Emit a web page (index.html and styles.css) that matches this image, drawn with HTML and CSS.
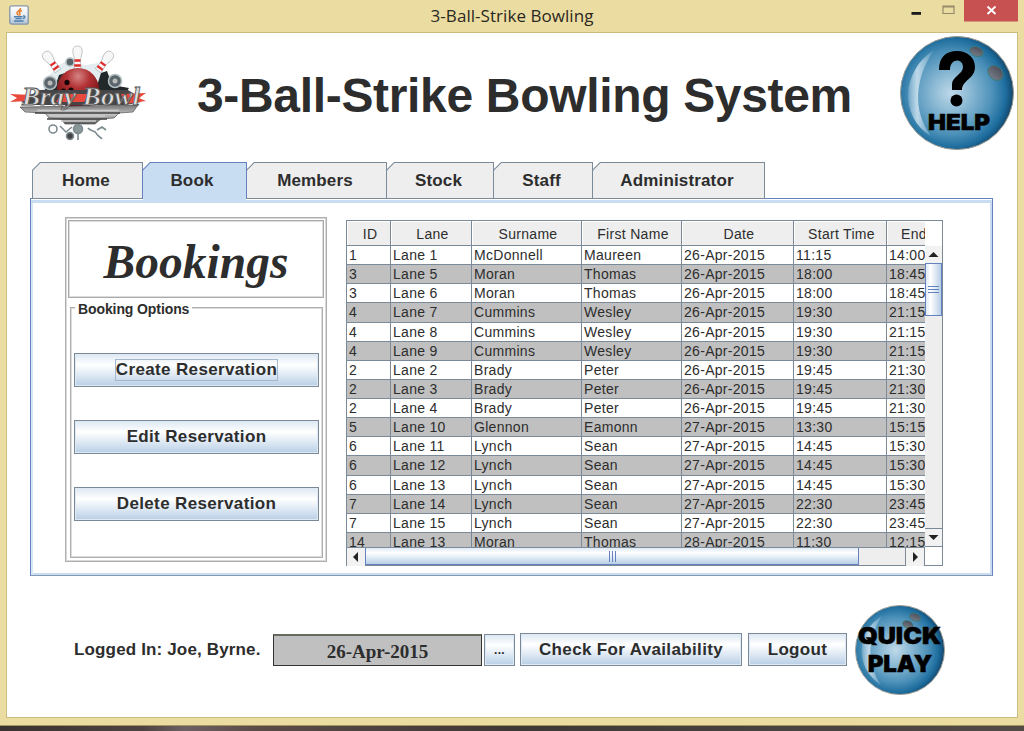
FILE: index.html
```html
<!DOCTYPE html>
<html lang="en">
<head>
<meta charset="utf-8">
<title>3-Ball-Strike Bowling</title>
<link rel="stylesheet" href="styles.css">
</head>
<body>
<div class="window">
  <div class="titlebar">
    <svg class="java" width="20" height="20" viewBox="0 0 20 20"><defs><linearGradient id="jv" x2="0" y2="1"><stop offset="0" stop-color="#fff"/><stop offset=".5" stop-color="#e8eef4"/><stop offset="1" stop-color="#a9bfd4"/></linearGradient></defs><rect x=".8" y=".8" width="18.4" height="18.4" rx="2" fill="url(#jv)" stroke="#8596a6" stroke-width="1.3"/><path d="M11.500 3c1 2-4 3-3.500 5 .2 1 1.500 1.300 1 2.600M13 5.500c-2.200 .8-3.200 1.900-2.300 2.900.6.8.2 1.500-.3 1.800" fill="none" stroke="#e5822f" stroke-width="1.600"/><path d="M5 11.800h8.500M6.500 13.600h6M14 11c2.600-.5 2.400 2-.3 2.600M5 16h9.500" fill="none" stroke="#4c7fae" stroke-width="1.400"/></svg>
    <span class="caption">3-Ball-Strike Bowling</span>
    <svg class="controls" width="113" height="22" viewBox="0 0 113 22"><rect x="6.500" y="12" width="9.500" height="2.800" fill="#1b1b1b"/><path d="M38 6h11v7.500h-11zM38 6.800h11" fill="none" stroke="#96896a" stroke-width="1.200"/><rect x="59" width="54" height="21.500" fill="#c75050"/><path d="M82.500 6.500l8 7.500M90.500 6.500l-8 7.500" stroke="#fff" stroke-width="1.900"/></svg>
  </div>
  <div class="client">
    <header class="header">
      <svg class="logo" width="142" height="100" viewBox="0 0 142 100">
        <defs>
          <radialGradient id="red" cx=".5" cy=".2" r=".8"><stop offset="0" stop-color="#d58484"/><stop offset=".35" stop-color="#b23134"/><stop offset="1" stop-color="#5a0709"/></radialGradient>
          <linearGradient id="silver" x2="0" y2="1"><stop offset="0" stop-color="#777"/><stop offset=".5" stop-color="#c4c4c4"/><stop offset="1" stop-color="#555"/></linearGradient>
          <g id="pin"><path d="M-3 8C-3 5-5.500 1-4.500-3C-3.500-7 3.500-7 4.500-3C5.500 1 3 5 3 8L3.500 17H-3.500Z" fill="#f7f7f7" stroke="#b5babb" stroke-width=".8"/><path d="M-3 8.500H3M-3.300 13.500H3.300" stroke="#e02b2b" stroke-width="2.400"/></g>
        </defs>
        <path d="M50 22c6-3 8-6 13-4l2 3 12 1 12-2 6 9 8 4v10l18 8-12 8H27l-5-7 12-6 2-11 8-6z" fill="#e3edef"/>
        <path d="M34 49l4-5 8 0 4-12 6-2-3 12 34 4 5-16 6-2 5 14 17 3-4 6H30z" fill="#23282a"/>
        <g fill="#59656a" stroke="#b3bfc1" stroke-width="1.500"><circle cx="61" cy="19" r="4"/><circle cx="41" cy="40" r="6.500"/><circle cx="106" cy="38" r="6.500"/></g>
        <g fill="#bbb"><circle cx="41" cy="40" r="2.500"/><circle cx="106" cy="38" r="2.500"/></g>
        <use href="#pin" transform="translate(39 14) rotate(-36)"/><use href="#pin" transform="translate(68.500 9)"/><use href="#pin" transform="translate(99 14) rotate(36)"/>
        <circle cx="69" cy="46" r="21" fill="url(#red)"/><ellipse cx="58" cy="39.500" rx="2.600" ry="2.800" fill="#170505"/><circle cx="54.500" cy="48" r="2.600" fill="#170505"/><circle cx="62" cy="47" r="2.600" fill="#170505"/>
        <path d="M14 52l10-1 4-4h91l6 4 9 0-5 5 3 3-15 3H21l-9-3 6-4z" fill="#464648"/>
        <path d="M1 51l22 1-5 6-17 1 7-4zM112 51l25-1-7 5 7 3-21 3zM52 51h28l-5 8H47z" fill="#e9483c"/>
        <path d="M11 64l118-2-5 7-14 1-5 5-13 1-6 5H56l-4-5-12-1-4-5-20-1z" fill="url(#silver)" stroke="#555" stroke-width=".7"/>
        <path d="M26 70h85M38 76h60" stroke="#444" stroke-width="1.400"/>
        <path d="M28 67.500h82M40 73h56M52 78h35" stroke="#ccc" stroke-width="1.500"/>
        <g fill="none" stroke="#7d8a8e" stroke-width="1.600"><circle cx="44" cy="86" r="4"/><circle cx="69" cy="86" r="4.500" fill="#8a9799"/><circle cx="61" cy="93" r="3.500" fill="#444"/><path d="M79 85c3 4 7 2 8 5s5 4 6 6M88 87l5-3 4 3M51 83l6 6 6-5M69 91v6"/></g>
        <text class="script" x="13" y="62" textLength="118" lengthAdjust="spacingAndGlyphs">Bray Bowl</text>
      </svg>
      <h1 class="heading">3-Ball-Strike Bowling System</h1>
      <svg class="help" width="116" height="116" viewBox="0 0 116 116">
        <defs>
          <radialGradient id="ball" cx=".45" cy=".5" r=".56"><stop offset="0" stop-color="#bfd9e9"/><stop offset=".25" stop-color="#94bfd8"/><stop offset=".65" stop-color="#4d91b9"/><stop offset=".86" stop-color="#1d6d9e"/><stop offset=".95" stop-color="#155079"/><stop offset="1" stop-color="#132f41"/></radialGradient>
          <linearGradient id="shine"><stop offset="0" stop-color="#d7e9f3" stop-opacity=".25"/><stop offset=".35" stop-color="#d7e9f3" stop-opacity=".8"/><stop offset="1" stop-color="#d7e9f3" stop-opacity=".1"/></linearGradient>
          <linearGradient id="hole" x2="0" y2="1"><stop offset="0" stop-color="#4d4f5b"/><stop offset="1" stop-color="#737b86"/></linearGradient>
        </defs>
        <circle cx="58" cy="58" r="56.500" fill="url(#ball)" stroke="#9c9a91" stroke-width="1"/>
        <path d="M35 15C2 36 0 82 32 101C13 75 16 43 35 15Z" fill="url(#shine)"/>
        <g fill="url(#hole)" stroke="#397973" stroke-width=".8"><ellipse cx="77.500" cy="16.500" rx="7" ry="4.700" transform="rotate(20 77.500 16.500)"/><ellipse cx="96.500" cy="38" rx="8.500" ry="6.500" transform="rotate(43 96.500 38)"/></g>
        <path d="M40 35C40 22 47 16 58 16C69 16 76 23 76 32C76 44 63 45 63 55H53V49C53 42 64 39 64 32C64 23 51 23 51 35Z"/><circle cx="57.500" cy="65.500" r="6"/>
        <text class="black" x="29" y="95" font-size="21.500" textLength="62" lengthAdjust="spacingAndGlyphs">HELP</text>
      </svg>
    </header>

    <main class="main">
      <nav class="tabs">
        <span class="tab home">Home</span><span class="tab book active">Book</span><span class="tab members">Members</span><span class="tab stock">Stock</span><span class="tab staff">Staff</span><span class="tab admin">Administrator</span>
      </nav>
      <div class="pane">
        <section class="side">
          <div class="side-title">Bookings</div>
          <div class="options">
            <span class="legend">Booking Options</span>
            <button class="btn"><span class="focus">Create Reservation</span></button>
            <button class="btn">Edit Reservation</button>
            <button class="btn">Delete Reservation</button>
          </div>
        </section>
        <section class="grid">
          <div class="head"><div class="headrow"><span>ID</span><span>Lane</span><span>Surname</span><span>First Name</span><span>Date</span><span>Start Time</span><span class="end">End</span></div></div>
          <div class="rows">
            <div class="row"><span>1</span><span>Lane 1</span><span>McDonnell</span><span>Maureen</span><span>26-Apr-2015</span><span>11:15</span><span>14:00</span></div>
            <div class="row"><span>3</span><span>Lane 5</span><span>Moran</span><span>Thomas</span><span>26-Apr-2015</span><span>18:00</span><span>18:45</span></div>
            <div class="row"><span>3</span><span>Lane 6</span><span>Moran</span><span>Thomas</span><span>26-Apr-2015</span><span>18:00</span><span>18:45</span></div>
            <div class="row"><span>4</span><span>Lane 7</span><span>Cummins</span><span>Wesley</span><span>26-Apr-2015</span><span>19:30</span><span>21:15</span></div>
            <div class="row"><span>4</span><span>Lane 8</span><span>Cummins</span><span>Wesley</span><span>26-Apr-2015</span><span>19:30</span><span>21:15</span></div>
            <div class="row"><span>4</span><span>Lane 9</span><span>Cummins</span><span>Wesley</span><span>26-Apr-2015</span><span>19:30</span><span>21:15</span></div>
            <div class="row"><span>2</span><span>Lane 2</span><span>Brady</span><span>Peter</span><span>26-Apr-2015</span><span>19:45</span><span>21:30</span></div>
            <div class="row"><span>2</span><span>Lane 3</span><span>Brady</span><span>Peter</span><span>26-Apr-2015</span><span>19:45</span><span>21:30</span></div>
            <div class="row"><span>2</span><span>Lane 4</span><span>Brady</span><span>Peter</span><span>26-Apr-2015</span><span>19:45</span><span>21:30</span></div>
            <div class="row"><span>5</span><span>Lane 10</span><span>Glennon</span><span>Eamonn</span><span>27-Apr-2015</span><span>13:30</span><span>15:15</span></div>
            <div class="row"><span>6</span><span>Lane 11</span><span>Lynch</span><span>Sean</span><span>27-Apr-2015</span><span>14:45</span><span>15:30</span></div>
            <div class="row"><span>6</span><span>Lane 12</span><span>Lynch</span><span>Sean</span><span>27-Apr-2015</span><span>14:45</span><span>15:30</span></div>
            <div class="row"><span>6</span><span>Lane 13</span><span>Lynch</span><span>Sean</span><span>27-Apr-2015</span><span>14:45</span><span>15:30</span></div>
            <div class="row"><span>7</span><span>Lane 14</span><span>Lynch</span><span>Sean</span><span>27-Apr-2015</span><span>22:30</span><span>23:45</span></div>
            <div class="row"><span>7</span><span>Lane 15</span><span>Lynch</span><span>Sean</span><span>27-Apr-2015</span><span>22:30</span><span>23:45</span></div>
            <div class="row"><span>14</span><span>Lane 13</span><span>Moran</span><span>Thomas</span><span>28-Apr-2015</span><span>11:30</span><span>12:15</span></div>
          </div>
          <div class="vbar">
            <svg class="arrow" width="17" height="17" viewBox="0 0 17 17"><path d="M3.500 11L8.500 6L13.500 11Z"/></svg>
            <div class="vthumb"><i></i><i></i><i></i></div>
            <svg class="arrow down" width="17" height="17" viewBox="0 0 17 17"><path d="M3.500 6L8.500 11L13.500 6Z"/></svg>
          </div>
          <div class="hbar">
            <svg class="arrow" width="18" height="18" viewBox="0 0 18 18"><path d="M11 4L6 9L11 14Z"/></svg>
            <div class="hthumb"><i></i><i></i><i></i></div>
            <svg class="arrow right" width="18" height="18" viewBox="0 0 18 18"><path d="M7 4L12 9L7 14Z"/></svg>
          </div>
          <div class="corner"></div>
        </section>
      </div>
    </main>

    <footer class="footer">
      <span class="user">Logged In: Joe, Byrne.</span>
      <span class="date">26-Apr-2015</span>
      <button class="btn dots">...</button>
      <button class="btn check">Check For Availability</button>
      <button class="btn logout">Logout</button>
      <svg class="quick" width="92" height="92" viewBox="0 0 94 94">
        <circle cx="47" cy="47" r="45.500" fill="url(#ball)" stroke="#a5a298" stroke-width="1"/>
        <path d="M29 12C2 28 0 65 28 83C12 60 14 34 29 12Z" fill="url(#shine)"/>
        <g fill="url(#hole)" stroke="#397973" stroke-width=".7"><ellipse cx="62.500" cy="13.500" rx="6" ry="3.800" transform="rotate(20 62.500 13.500)"/><ellipse cx="55" cy="21" rx="5.500" ry="3.800" transform="rotate(20 55 21)"/><ellipse cx="78" cy="30" rx="7" ry="5" transform="rotate(43 78 30)"/></g>
        <text class="black" x="4" y="41" font-size="23.500" textLength="85" lengthAdjust="spacingAndGlyphs">QUICK</text>
        <text class="black" x="14" y="69.500" font-size="23.500" textLength="66" lengthAdjust="spacingAndGlyphs">PLAY</text>
      </svg>
    </footer>
  </div>
</div>
<div class="desktop"></div>
</body>
</html>
```
FILE: styles.css
```css
* { box-sizing: border-box; }
body { margin: 0; width: 1024px; height: 731px; overflow: hidden; font-family: "Liberation Sans", Arial, sans-serif; color: #2d2d2d; }
.window { height: 726px; background: #ebdca2; padding: 0 6px; border-bottom: 1px solid #a69560; }
.desktop { height: 5px; background: linear-gradient(90deg, #37312f, #4d4441 14%, #6d6063 18%, #5b4b47 25%, #3d3735 50%, #494341 80%, #514a45); }
.titlebar { height: 32px; display: grid; grid-template-columns: 113px 1fr 113px; }
.java { margin: 5px 0 0 3px; }
.caption { text-align: center; font: 17px/31px "Open Sans", sans-serif; letter-spacing: .05px; color: #2a2820; }
.client { height: 686px; background: #fff; border: 1px solid #cdbc80; }
.header { height: 129px; display: flex; padding-left: 2px; }
.logo { margin-top: 10px; flex: none; }
.script { font: italic bold 25px "Liberation Serif", serif; fill: #ddd; stroke: #555; stroke-width: .8px; }
.heading { margin: 33px 0 0 46px; width: 656px; font-size: 48px; line-height: 60px; white-space: nowrap; letter-spacing: -.33px; flex: none; }
.help { margin: 2px 0 0 46px; flex: none; }
.black { font-family: Inter, sans-serif; font-weight: 900; fill: #000; stroke: #000; stroke-width: .5px; }

.main { margin-left: 23px; width: 963px; }
.tabs { display: flex; height: 37px; padding-left: 2px; margin-bottom: -1px; }
.tab { position: relative; z-index: 0; height: 37px; text-align: center; font-weight: bold; font-size: 17px; line-height: 38px; background: #7a8a99; padding-right: 3px; margin-right: -1px; letter-spacing: .15px; clip-path: polygon(0 8px, 8px 0, 100% 0, 100% 100%, 0 100%); }
.tab::before { content: ""; position: absolute; z-index: -1; inset: 1px 1px 1px 1px; background: #eee; clip-path: polygon(0 7.5px, 7.5px 0, 100% 0, 100% 100%, 0 100%); }
.tab.active { background: #6382bf; height: 41px; z-index: 2; margin-bottom: -4px; clip-path: polygon(0 8px, 8px 0, 100% 0, 100% 37px, calc(100% - 1px) 37px, calc(100% - 1px) 100%, 1px 100%, 1px 37px, 0 37px); }
.tab.active::before { background: #c8ddf2; bottom: 0; }
.home { width: 111px; } .book { width: 105px; padding-right: 5px; } .members { width: 141px; } .stock { width: 108px; } .staff { width: 100px; } .admin { width: 173px; }
.pane { height: 378px; border: 1px solid #6382bf; border-bottom-color: #8499b4; box-shadow: inset 0 1px #fff, inset 0 4px #c8ddf2, inset 2px 0 #d8e7f6, inset -2px -2px #c8ddf2; display: flex; padding: 18px 0 0 34px; gap: 19px; }
.side { width: 262px; height: 345px; border: 1px solid #aeaeae; box-shadow: inset 0 0 0 1px #d9d9d9; padding: 2px; display: flex; flex-direction: column; gap: 9px; }
.side-title { height: 78px; border: 1px solid #aaa; box-shadow: inset 0 0 0 1px #ddd; text-align: center; font: italic bold 47.5px/82px "Liberation Serif", serif; }
.options { flex: 1; margin: 0 1px 1px 2px; border: 1px solid #aeaeae; box-shadow: inset 0 0 0 1px #dcdcdc; padding: 45px 3px 0; display: flex; flex-direction: column; gap: 33px; position: relative; }
.legend { position: absolute; top: -8px; left: 4px; padding: 0 3px; background: #fff; font-size: 14px; line-height: 18px; font-weight: bold; letter-spacing: -.1px; white-space: nowrap; }
.btn { appearance: none; margin: 0; padding: 0; height: 34px; border: 1px solid #7a8a99; box-shadow: inset 0 0 0 1px #dfe9f3; border-radius: 0; background: linear-gradient(#dde8f3, #fff 34%, #e4edf6 60%, #b8cfe5); font: bold 17px/20px "Liberation Sans", Arial, sans-serif; letter-spacing: .35px; color: #2d2d2d; white-space: nowrap; flex: none; }
.focus { display: inline-block; border: 1px solid #a3b8cc; padding: 0; line-height: 20px; }

.grid { width: 597px; height: 346px; margin-top: 3px; border: 1px solid #7a8a99; display: grid; grid-template-columns: 578px 17px; grid-template-rows: 25px 301px 18px; font-size: 14px; letter-spacing: .3px; }
.head, .rows { overflow: hidden; }
.head { grid-column: 1; }
.headrow, .row { display: grid; grid-template-columns: 44px 81px 110px 100px 112px 93px 75px; width: 615px; }
.headrow span { height: 25px; border-right: 1px solid #7a8a99; border-bottom: 1px solid #7a8a99; background: #eee; box-shadow: inset 1px 1px #fff; text-align: center; line-height: 26px; padding-left: 3px; }
.headrow .end { text-align: left; padding-left: 14px; }
.rows { grid-column: 1; grid-row: 2; }
.row { height: 19.13px; }
.row span { border-right: 1px solid #7a8a99; border-bottom: 1px solid #7a8a99; line-height: 18px; padding-left: 2px; white-space: nowrap; }
.row:nth-child(even) { background: #c0c0c0; }
.vbar { grid-column: 2; grid-row: 2; background: #eee; display: flex; flex-direction: column; }
.arrow { background: #f2f2f2; fill: #222; flex: none; display: block; }
.vthumb { height: 53px; border: 1px solid #6382bf; background: linear-gradient(90deg, #dfeaf5, #fff 30%, #b8cfe5); display: flex; flex-direction: column; justify-content: center; align-items: center; gap: 2px; }
.vthumb i { width: 11px; height: 1px; background: #6382bf; }
.down { margin-top: auto; height: 19px; border-top: 1px solid #7a8a99; border-bottom: 1px solid #7a8a99; }
.hbar { grid-column: 1; grid-row: 3; background: #eee; display: flex; border-top: 1px solid #7a8a99; border-right: 1px solid #7a8a99; }
.hthumb { width: 494px; border: 1px solid #6382bf; border-top: 0; background: linear-gradient(#dfeaf5, #fff 30%, #b8cfe5); display: flex; align-items: center; justify-content: center; gap: 2px; }
.hthumb i { width: 1px; height: 11px; background: #6382bf; }
.right { margin-left: auto; width: 19px; border-left: 1px solid #7a8a99; }
.corner { grid-column: 2; grid-row: 3; background: #fff; }

.footer { display: flex; height: 94px; margin-top: 28px; padding-left: 67px; }
.user { width: 199px; margin-top: 36px; font-weight: bold; font-size: 17px; line-height: 20px; letter-spacing: .15px; white-space: nowrap; }
.date { width: 209px; height: 32px; margin-top: 30px; border: 1px solid #333; border-top: 2px solid #666b60; background: #c0c0c0; text-align: center; font: bold 19px/31px "Liberation Serif", serif; }
.dots { width: 31px; height: 32px; margin: 30px 0 0 2px; font-size: 12px; }
.check { width: 222px; height: 33px; margin: 29px 0 0 5px; }
.logout { width: 99px; height: 33px; margin: 29px 0 0 6px; }
.quick { margin-left: 7px; }
```
